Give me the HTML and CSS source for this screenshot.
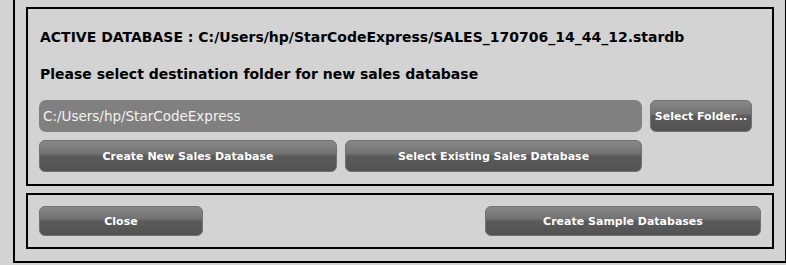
FILE: index.html
```html
<!DOCTYPE html>
<html lang="en">
<head>
    <meta charset="UTF-8">
    <meta name="viewport" content="width=device-width, initial-scale=1.0">
    <title>Sales Database</title>
    <link rel="stylesheet" href="styles.css">
</head>
<body>
    <div class="dialog">
        <div class="panel db-panel">
            <p class="label">ACTIVE DATABASE : C:/Users/hp/StarCodeExpress/SALES_170706_14_44_12.stardb</p>
            <p class="label">Please select destination folder for new sales database</p>
            <div class="db-grid">
                <input type="text" class="folder-input" value="C:/Users/hp/StarCodeExpress">
                <button class="btn">Select Folder...</button>
                <button class="btn">Create New Sales Database</button>
                <button class="btn">Select Existing Sales Database</button>
            </div>
        </div>
        <div class="panel footer-panel">
            <button class="btn btn-close">Close</button>
            <button class="btn btn-sample">Create Sample Databases</button>
        </div>
    </div>
</body>
</html>
```

FILE: styles.css
```css
body {
    margin: 0;
    background-color: #d3d3d3;
    font-family: 'DejaVu Sans', Verdana, sans-serif;
    color: #000;
    overflow: hidden;
}
.dialog {
    margin: -6px 0 0 13px;
    border: 2px solid #000;
    width: 748px;
    padding: 11px 11px 12px 11px;
    display: flex;
    flex-direction: column;
    gap: 7px;
}
.panel {
    border: 2px solid #000;
}
.db-panel {
    padding: 20px 19px 12px 11px;
}
.label {
    margin: 0 0 20px 1px;
    font-size: 14px;
    font-weight: bold;
    line-height: 17px;
}
.db-grid {
    display: grid;
    grid-template-columns: 298px 297px 102px;
    gap: 8px;
    margin-top: -3px;
}
.folder-input {
    grid-column: 1 / 3;
    height: 32px;
    box-sizing: border-box;
    border: none;
    border-radius: 7px;
    background: #808080;
    color: #f2f2f2;
    font-family: 'DejaVu Sans', Verdana, sans-serif;
    font-size: 13.5px;
    padding: 0 4px;
    outline: none;
}
.btn {
    height: 32px;
    box-sizing: border-box;
    border: 1px solid #717171;
    border-radius: 6px;
    background: linear-gradient(#888888 0%, #727272 42%, #5b5b5b 50%, #525252 100%);
    color: #fff;
    font-family: 'DejaVu Sans', Verdana, sans-serif;
    font-size: 11px;
    font-weight: bold;
    padding: 0;
    cursor: pointer;
}
.footer-panel {
    display: flex;
    justify-content: space-between;
    padding: 11px;
}
.footer-panel .btn {
    height: 30px;
}
.btn-close {
    width: 164px;
}
.btn-sample {
    width: 276px;
}
```
